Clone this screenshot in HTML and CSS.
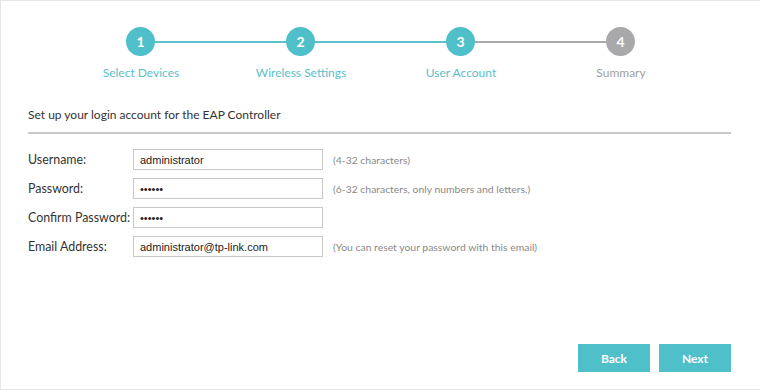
FILE: index.html
```html
<!DOCTYPE html>
<html lang="en">
<head>
    <meta charset="UTF-8">
    <meta name="viewport" content="width=device-width, initial-scale=1.0">
    <title>EAP Controller - User Account</title>
    <link rel="stylesheet" href="styles.css">
</head>
<body>
    <div class="page">
        <section class="stepper">
            <div class="step-track">
                <span class="step-dot on">1</span>
                <span class="step-line on"></span>
                <span class="step-dot on">2</span>
                <span class="step-line on"></span>
                <span class="step-dot on">3</span>
                <span class="step-line"></span>
                <span class="step-dot">4</span>
            </div>
            <ul class="step-names">
                <li class="on">Select Devices</li>
                <li class="on">Wireless Settings</li>
                <li class="on">User Account</li>
                <li>Summary</li>
            </ul>
        </section>

        <h2 class="form-title">Set up your login account for the EAP Controller</h2>

        <form class="account-form">
            <div class="form-row">
                <label for="username">Username:</label>
                <input type="text" id="username" value="administrator">
                <span class="hint">(4-32 characters)</span>
            </div>
            <div class="form-row">
                <label for="password">Password:</label>
                <input type="password" id="password" value="123456">
                <span class="hint">(6-32 characters, only numbers and letters.)</span>
            </div>
            <div class="form-row">
                <label for="confirm">Confirm Password:</label>
                <input type="password" id="confirm" value="123456">
            </div>
            <div class="form-row">
                <label for="email">Email Address:</label>
                <input type="text" id="email" value="administrator@tp-link.com">
                <span class="hint">(You can reset your password with this email)</span>
            </div>
        </form>

        <div class="btn-bar">
            <button type="button" class="btn">Back</button>
            <button type="button" class="btn">Next</button>
        </div>
    </div>
</body>
</html>
```

FILE: styles.css
```css
*{margin:0; padding:0; box-sizing: border-box}
ul,li{list-style: none;}
body{font-family: Lato, "Open Sans", sans-serif; color:#333; background:#fff;}

.page{width: 760px; height: 390px; border:1px solid #e6e6e6; border-right: none; padding: 26px 28px 17px 27px; display: flex; flex-direction: column;}

/* 단계 표시 */
.step-track{display: flex; align-items: center; margin-left: 98px;}
.step-dot{width: 29px; height: 29px; border-radius: 50%; background:#a9a9ab; color:#fff; font-size: 14px; font-weight: 700; display: flex; align-items: center; justify-content: center;}
.step-dot.on{background:#4fbfca;}
.step-line{width: 131px; height: 2px; background:#aaa;}
.step-line.on{background:#5cc3cc;}
.step-names{display: flex; margin-left: 33px; margin-top: 9px;}
.step-names li{width: 160px; text-align: center; font-size: 12px; color:#a0a0a0; line-height: 16px;}
.step-names li.on{color:#5bc0ca;}

.form-title{font-size: 12px; font-weight: 400; color:#333; line-height: 16px; margin-top: 26px; padding-bottom: 9px; border-bottom: 2px solid #c9c9c9; margin-right: 1px;}

/* 입력 폼 */
.account-form{display: flex; flex-direction: column; gap: 8px; margin-top: 15px;}
.form-row{display: flex; align-items: center; height: 21px;}
.form-row label{width: 105px; font-size: 12.4px; color:#333; white-space: nowrap;}
.form-row input{width: 190px; height: 21px; border:1px solid #c8c8c8; padding: 0 6px; font-family: "Liberation Sans", Arial, sans-serif; font-size: 11px; color:#222; outline: none;}
.hint{margin-left: 10px; font-size: 10.4px; color:#8a8a8a; white-space: nowrap;}

.btn-bar{display: flex; justify-content: flex-end; gap: 9px; margin-top: auto; margin-right: 1px;}
.btn{width: 72px; height: 28px; border: none; background:#4fbfca; color:#fff; font-family: Lato, sans-serif; font-size: 12px; font-weight: 700; cursor: pointer;}
```
